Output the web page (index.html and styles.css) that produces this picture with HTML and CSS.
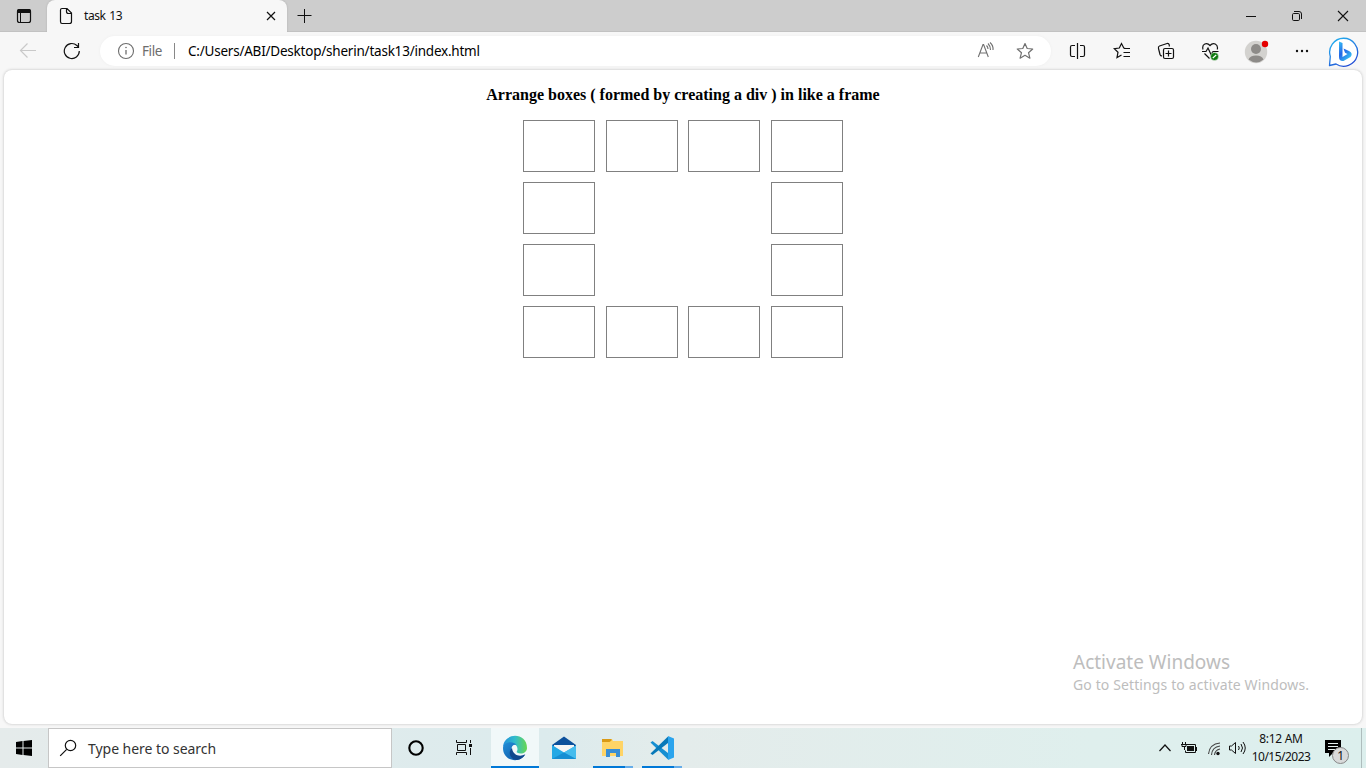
FILE: index.html
```html
<!DOCTYPE html>
<html lang="en">
<head>
<meta charset="utf-8">
<title>task 13</title>
<link rel="stylesheet" href="styles.css">
</head>
<body>
<div class="desktop">
  <header class="tabbar">
    <div class="tab-actions">
      <svg width="16" height="16" viewBox="16 8 16 16"><rect x="17.5" y="9.5" width="13" height="13" rx="2" fill="none" stroke="#111" stroke-width="1.2"/><path d="M17 13v-2q0-2 2-2h10q2 0 2 2v2z" fill="#111"/><path d="M20.5 13v9" stroke="#111"/></svg>
    </div>
    <div class="tab">
      <svg width="14" height="18" viewBox="59 7 14 18" fill="none" stroke="#111" stroke-width="1.2"><path d="M62 8.500h5l4.500 4.500v8.500q0 2-2 2h-7.500q-1.500 0-1.500-2v-11.500q0-1.500 1.500-1.500zM66.500 8.500v3q0 2 2 2h3"/></svg>
      <span class="tab-title">task 13</span>
      <svg class="tab-close" width="10" height="10" viewBox="266 11 10 10" stroke="#111" stroke-width="1.2"><path d="M267 12l8 8M275 12l-8 8"/></svg>
    </div>
    <svg class="new-tab" width="16" height="16" viewBox="297 8 16 16" stroke="#111"><path d="M297.500 15.500h14M304.500 9v14"/></svg>
    <div class="window-controls">
      <svg width="12" height="12" viewBox="1245 10 12 12" stroke="#111"><path d="M1246 16.500h10"/></svg>
      <svg width="12" height="12" viewBox="1291 10 12 12" fill="none" stroke="#111"><rect x="1292.500" y="13.500" width="7" height="7" rx="1.200"/><path d="M1294 11.500h5q2.500 0 2.500 2.500v5"/></svg>
      <svg width="12" height="12" viewBox="1337 10 12 12" stroke="#111" stroke-width="1.100"><path d="M1338 11l10 10M1348 11l-10 10"/></svg>
    </div>
  </header>

  <div class="toolbar">
    <svg class="back" width="18" height="16" viewBox="19 43 18 16" fill="none" stroke="#c9c9c9" stroke-width="1.200"><path d="M36 50.500H20.500M27.500 43.500l-7 7 7 7"/></svg>
    <svg class="reload" width="18" height="18" viewBox="63 42 18 18" fill="none" stroke="#111" stroke-width="1.200"><path d="M79.300 51a7.500 7.500 0 1 1-2.400-5.500l1.600 1.700M78.500 43v4.500h-4.500"/></svg>
    <div class="address">
      <svg width="18" height="18" viewBox="117 42 18 18" fill="none" stroke="#6d6d6d"><circle cx="126" cy="51" r="7.500" stroke-width="1.100"/><path d="M126 50v4.500" stroke-width="1.300"/><circle cx="126" cy="47.500" r=".8" fill="#6d6d6d" stroke="none"/></svg>
      <span class="scheme">File</span>
      <span class="divider"></span>
      <span class="url">C:/Users/ABI/Desktop/sherin/task13/index.html</span>
      <svg class="read" width="18" height="18" viewBox="977 42 18 18" fill="none" stroke="#707070" stroke-width="1.100"><path d="M978.300 57l4.700-12.500h.6l4.700 12.500M980 53h6.700M986.500 45.500q1.500 1.500 1.500 3.500M988 43.500q2.500 2.500 2.500 6.500M990 42.500q3.500 3 3 7.500"/></svg>
      <svg class="star" width="18" height="18" viewBox="1016 42 18 18" fill="none" stroke="#707070" stroke-width="1.200" stroke-linejoin="round"><path d="M1025 43.500l2.200 5 5.500.5-4.200 3.700 1.400 5.500-4.900-2.900-4.900 2.900 1.400-5.500-4.200-3.700 5.500-.5z"/></svg>
    </div>
    <div class="tools">
      <svg width="18" height="18" viewBox="1068 42 18 18" fill="none" stroke="#111" stroke-width="1.200"><path d="M1075 45.500h-3q-1.500 0-1.500 1.500v8q0 1.500 1.500 1.500h3M1080 45.500h3q1.500 0 1.500 1.500v8q0 1.500-1.500 1.500h-3M1077.500 43v16"/></svg>
      <svg width="18" height="18" viewBox="1113 42 18 18" fill="none" stroke="#111" stroke-width="1.200"><path d="M1125.500 48.500l-1.700-.5-2.300-4.500-2.200 4.500-5 .7 3.700 3.500-1 5.300 4.500-2.500M1124 48.500h6M1123.500 52.500h6.500M1123.500 56.500h6.500"/></svg>
      <svg width="18" height="18" viewBox="1157 42 18 18" fill="none" stroke="#111" stroke-width="1.200"><rect x="1163.500" y="48.500" width="10" height="10" rx="1.500"/><path d="M1168.500 50.500v6M1165.500 53.500h6M1162 56q-1.500 0-2-1.500l-1.500-6q-.5-2 1-2.500l7.500-2.500q1.800-.3 2.300 1.500v1.500"/></svg>
      <svg width="19" height="19" viewBox="1201 42 19 19" fill="none" stroke="#111" stroke-width="1.200"><path d="M1203 49.500c-1.500-6 4-7.500 7-4 3-3.500 8.500-2 7.300 4M1204.500 53.500l5 5M1202 51.500h4l2-3.500 3 6.500 2-3h5.500"/><circle cx="1214.500" cy="56.500" r="4" fill="#107c10" stroke="#f7f7f7" stroke-width=".5"/><path d="M1212.800 58l3.400-3" stroke="#fff"/></svg>
      <svg class="avatar" width="26" height="26" viewBox="1244 37 26 26"><circle cx="1256" cy="51" r="11.200" fill="#d3d2cf"/><circle cx="1256" cy="48" r="5" fill="#8d8b88"/><path d="M1248.500 58.500q1.500-4 7.500-4t7.500 4q-7 6-15 0" fill="#8d8b88"/><circle cx="1265" cy="43" r="3.200" fill="#e50000"/></svg>
      <svg class="more" width="16" height="6" viewBox="1294 48 16 6"><g fill="#111"><circle cx="1297" cy="51" r="1.200"/><circle cx="1302" cy="51" r="1.200"/><circle cx="1307" cy="51" r="1.200"/></g></svg>
      <svg class="bing" width="34" height="34" viewBox="1327 34 34 34"><defs><linearGradient id="ring" x2=".6" y2="1"><stop stop-color="#22b8f1"/><stop offset="1" stop-color="#2350d6"/></linearGradient><linearGradient id="bee" x2=".7" y2="1"><stop stop-color="#36c3f5"/><stop offset=".5" stop-color="#2465e7"/><stop offset="1" stop-color="#39c5f1"/></linearGradient></defs><path d="M1329.500 65.500l.8-9a14 14 0 1 1 5.700 7.500z" fill="#fff" stroke="url(#ring)" stroke-width="1.300" stroke-linejoin="round"/><path d="M1339 41.500l3.500 1.500v14l5-3-2.500-1.200-1.500-4.300 5.500 2.500q4.500 2.500 1.500 6l-7 4q-4.500.5-4.500-4z" fill="url(#bee)"/></svg>
    </div>
  </div>

  <main class="page">
    <h1 class="heading">Arrange boxes ( formed by creating a div ) in like a frame</h1>
    <div class="frame">
      <div class="box"></div><div class="box"></div><div class="box"></div><div class="box"></div>
      <div class="box"></div><div class="box right"></div>
      <div class="box"></div><div class="box right"></div>
      <div class="box"></div><div class="box"></div><div class="box"></div><div class="box"></div>
    </div>
    <div class="activation">
      <div class="act-title">Activate Windows</div>
      <div class="act-text">Go to Settings to activate Windows.</div>
    </div>
  </main>

  <footer class="taskbar">
    <div class="start"><svg width="16" height="16" viewBox="16 740 16 16"><path d="M16 742l6.500-1v6.500H16zM23.500 741l8.500-1v7.500h-8.500zM16 748.500h6.500v6.500l-6.500-1zM23.500 748.500h8.500v7.500l-8.500-1z"/></svg></div>
    <div class="search">
      <svg width="18" height="18" viewBox="59 739 18 18" fill="none" stroke="#111" stroke-width="1.200"><circle cx="70.500" cy="745.500" r="5.200"/><path d="M66.700 749.300l-6.500 6.500"/></svg>
      <span class="search-text">Type here to search</span>
    </div>
    <div class="app"><svg width="18" height="18" viewBox="407 739 18 18"><circle cx="416" cy="748" r="6.700" fill="none" stroke="#000" stroke-width="2.100"/></svg></div>
    <div class="app"><svg width="18" height="18" viewBox="455 739 18 18" fill="none" stroke="#111"><path d="M456.500 740v2.500h10V740M456.500 755v-2.500h10v2.500M457.500 744.500h8v6h-8zM470.500 740v3M470.500 748v7"/><rect x="469" y="744" width="3" height="3" fill="#111" stroke="none"/></svg></div>
    <div class="app active"><svg width="26" height="26" viewBox="502 735 26 26"><defs><linearGradient id="wave"><stop stop-color="#238fdb"/><stop offset=".5" stop-color="#31bccc"/><stop offset="1" stop-color="#68d750"/></linearGradient><linearGradient id="sea" y2="1"><stop stop-color="#238fd8"/><stop offset="1" stop-color="#0b51a0"/></linearGradient></defs><path d="M503 747c1-15 24-15 24 1 0 5-6 7-10 4.500-1-1 .5-1 .5-3.500 0-7-12-7-14.500-2z" fill="url(#wave)"/><path d="M503 748c0-6 10-8 13.500-3-5-1-6 4-4 8 2.500 5 8 5 12.500 2-6 9-22 6-22-7z" fill="url(#sea)"/><path d="M512 748c-5 5-1 12 5 12 3 0 7-3 8.300-5.700-5 2.700-12.300 1.700-13.300-6.300z" fill="#10488e"/></svg></div>
    <div class="app"><svg width="24" height="24" viewBox="552 736 24 24"><path d="M552 745l12-8.500 12 8.500v4h-24z" fill="#0c509c"/><path d="M554 745h20v8h-20z" fill="#f5f5f5"/><path d="M552 745l12 7.500 12-7v13.500h-24z" fill="#23a8e5"/><path d="M564 752.500l12-7V759z" fill="#45bced"/><path d="M552 759l12-6.500 12 6.500z" fill="#168ed3"/></svg></div>
    <div class="app open folder"><svg width="24" height="24" viewBox="601 736 24 24"><path d="M602 739h10l1 2h10v15h-21z" fill="#ffd466"/><path d="M602 739h9.500v1.500l-2 1.500H602z" fill="#da9a16"/><path d="M606 757v-8h14v8h-4v-4h-6v4z" fill="#398ed5"/></svg></div>
    <div class="app open"><svg width="24" height="24" viewBox="650 736 24 24"><path d="M650.500 742.500l2-1.500 15.500 12v6.500z" fill="#168fd2"/><path d="M650.500 753.500l17.500-17v6.500l-15.500 12z" fill="#0879b9"/><path d="M668 736l6 2.500v19l-6 2.500z" fill="#2ba4ed"/></svg></div>
    <div class="tray">
      <svg width="14" height="10" viewBox="1158 743 14 10" fill="none" stroke="#111" stroke-width="1.200"><path d="M1159.500 751l5.500-6 5.500 6"/></svg>
      <svg class="battery" width="17" height="14" viewBox="1181 741 17 14" fill="none" stroke="#111"><path d="M1187 744.500h8.500v8h-10v-2M1196.500 747v4M1182.500 742v2M1185.500 742v2M1181 744.500h6M1182 745v1.500h4v-2M1184.500 747v3"/><path d="M1187 746h7v5h-7z" fill="#111" stroke="none"/></svg>
      <svg class="wifi" width="14" height="15" viewBox="1207 741 14 15" fill="none" stroke="#444" stroke-width="1.100"><path d="M1208.500 754q1-10 11.500-11M1211.500 755q.5-8 8.500-9M1214.500 755q.5-5 5.500-6"/><circle cx="1218" cy="753.500" r="1.700" fill="#111" stroke="none"/></svg>
      <svg class="volume" width="18" height="16" viewBox="1228 740 18 16" fill="none" stroke="#111"><path d="M1229.500 746h2l4-3.500v11l-4-3.500h-2zM1238.500 746q1.500 2 0 4M1241 744q3 4 0 8M1243 742q4.500 6 0 12"/></svg>
      <div class="clock"><span class="time">8:12 AM</span><span class="date">10/15/2023</span></div>
      <svg class="notice" width="26" height="26" viewBox="1324 739 26 26"><path d="M1325 740h16v13h-8l-4 4v-4h-4z" fill="#000"/><path d="M1328 743.500h10M1328 746.500h10M1328 749.500h7" stroke="#e5efee"/><circle cx="1340.500" cy="755.500" r="8" fill="#d8dada" stroke="#888"/><text x="1337.200" y="760" class="badge">1</text></svg>
      <span class="desktop-edge"></span>
    </div>
  </footer>
</div>
</body>
</html>
```
FILE: styles.css
```css
* { box-sizing: border-box; }
body { margin: 0; overflow: hidden; font-family: "Noto Sans", "Open Sans", sans-serif; color: #111; }
svg { display: block; flex: none; }
span { white-space: nowrap; }
.desktop { width: 1366px; height: 768px; display: flex; flex-direction: column; background: #f7f7f7; }
.tabbar { height: 32px; background: #cdcdcd; display: flex; align-items: center; border-bottom: 1px solid #c2c2c2; flex: none; }
.tab-actions { width: 47px; height: 32px; padding: 8px 0 0 16px; }
.tab { width: 240px; height: 32px; background: #f7f7f7; border-radius: 8px 8px 0 0; display: flex; align-items: center; padding: 0 11px 0 12px; box-shadow: 0 0 2px #aaa; clip-path: inset(0 -2px 0 -2px); align-self: flex-start; }
.tab-title { margin-left: 11px; font-size: 12px; letter-spacing: -.42px; word-spacing: 1px; line-height: 16px; }
.tab-close { margin-left: auto; }
.new-tab { margin-left: 10px; }
.window-controls { margin-left: auto; display: flex; gap: 34px; padding-right: 17px; }
.toolbar { height: 38px; display: flex; align-items: center; flex: none; }
.back { margin-left: 19px; }
.reload { margin-left: 26px; }
.address { margin-left: 19px; width: 951px; height: 30px; background: #fff; border-radius: 15px; display: flex; align-items: center; padding: 0 17px; box-shadow: 0 0 3px #eee; flex: none; }
.scheme { width: 21px; margin-left: 7px; color: #6d6d6d; font-size: 13.5px; letter-spacing: -.4px; }
.divider { width: 1px; height: 16px; background: #888; margin: 0 13px 0 11px; }
.url { font-size: 13.5px; letter-spacing: -.22px; color: #000; }
.read { margin-left: auto; }
.star { margin-left: 21px; }
.tools { display: flex; align-items: center; gap: 26px; margin-left: 17px; }
.tools svg:nth-child(2) { margin-left: 1px; }
.avatar { margin-left: -2px; }
.more { margin-left: -2px; }
.bing { margin-left: -9px; }
.page { width: 1358px; height: 654px; margin-left: 4px; background: #fff; border-radius: 8px; box-shadow: 0 0 3px #bbb; display: flex; flex-direction: column; align-items: center; flex: none; }
.heading { margin: 16px 0 0; font: bold 16px/18px "Liberation Serif", serif; color: #000; white-space: nowrap; }
.frame { margin-top: 16px; width: 320px; display: grid; grid-template-columns: repeat(4, 72px); justify-content: space-between; grid-auto-rows: 52px; row-gap: 10px; }
.box { border: 1px solid #808080; }
.right { grid-column: 4; }
.activation { align-self: flex-end; margin: auto 53px 29px 0; width: 236px; color: #bdbdbd; white-space: nowrap; }
.act-title { font-size: 19px; line-height: 26px; }
.act-text { font-size: 14px; line-height: 20px; letter-spacing: .12px; }
.taskbar { margin-top: 4px; height: 40px; background: linear-gradient(90deg, #e5ebeb, #dcebed 40%, #e4eceb 50%, #dfefed 80%, #dcefed); display: flex; flex: none; }
.start { width: 48px; padding: 12px 16px; }
.search { width: 344px; border: 1px solid #c6c6c6; background: #fff; display: flex; align-items: center; padding-left: 10px; }
.search-text { font-size: 14px; letter-spacing: -.04px; margin-left: 11px; color: #333; }
.app { width: 48px; display: flex; align-items: center; justify-content: center; margin-right: 1px; }
.app:nth-of-type(3), .app:nth-of-type(4) { margin-right: 0; }
.active { margin-left: 3px; background: #f1f8f9; box-shadow: inset 0 -2px #0078d7; }
.open { background: linear-gradient(90deg, #0078d7 32px, #66ade9 32px) 4px 38px / 40px 2px no-repeat; }
.tray { margin-left: auto; display: flex; align-items: center; }
.battery { margin-left: 9px; }
.wifi { margin-left: 9px; }
.volume { margin-left: 7px; }
.clock { width: 58px; margin-left: 6px; display: flex; flex-direction: column; align-items: center; font-size: 12px; line-height: 18px; letter-spacing: -.52px; }
.time { letter-spacing: -.3px; }
.notice { margin-left: 14px; margin-top: 8px; }
.badge { font: 12px "Noto Sans", sans-serif; fill: #111; }
.desktop-edge { width: 5px; height: 40px; margin-left: 11px; border-left: 1px solid #aebdbd; }
```
